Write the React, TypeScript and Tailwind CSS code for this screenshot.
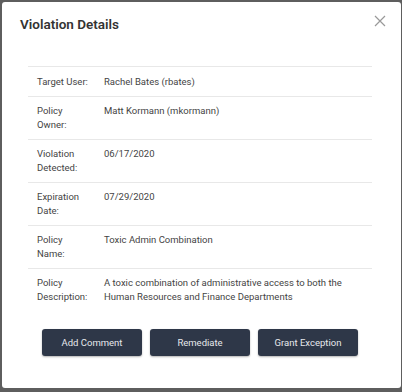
import React from "react";

const rows: [string, string][] = [
  ["Target User:", "Rachel Bates (rbates)"],
  ["Policy Owner:", "Matt Kormann (mkormann)"],
  ["Violation Detected:", "06/17/2020"],
  ["Expiration Date:", "07/29/2020"],
  ["Policy Name:", "Toxic Admin Combination"],
  [
    "Policy Description:",
    "A toxic combination of administrative access to both the Human Resources and Finance Departments",
  ],
];

const App = () => {
  return (
    <div className="h-[392px] w-[402px] bg-[#5e5e5e] pl-[2px] pr-px pt-[2px] font-['Roboto',sans-serif]">
      <div className="flex h-[386px] flex-col rounded-[3px] bg-white">
        <div className="flex items-start justify-between pl-[18px] pr-[15px] pt-[12px]">
          <h1 className="text-[13.5px] font-semibold text-[#333]">Violation Details</h1>
          <button className="mt-[1px] text-[#999]">
            <svg width="12" height="12" viewBox="0 0 12 12" stroke="currentColor" strokeWidth="1.2">
              <path d="M1 1L11 11M11 1L1 11" />
            </svg>
          </button>
        </div>
        <div className="mx-[26px] mt-[32px] mr-[29px] border-t border-[#e8e8e8]">
          {rows.map(([label, value], i) => (
            <div
              key={label}
              className={`flex px-[9px] text-[9.5px] leading-[14px] text-[#444] ${
                i === 0 ? "py-[7.5px]" : "py-[7px]"
              } ${i < rows.length - 1 ? "border-b border-[#e8e8e8]" : ""}`}
            >
              <div className="w-[67px] shrink-0 pr-[13px]">{label}</div>
              <div className="flex-1">{value}</div>
            </div>
          ))}
        </div>
        <div className="mt-[18px] flex justify-center gap-[8px] pr-[3px]">
          {["Add Comment", "Remediate", "Grant Exception"].map((b) => (
            <button
              key={b}
              className="h-[27px] w-[100px] rounded-[3px] bg-[#2e3748] text-[9.5px] text-[#e6e8ec] shadow-[0_1px_2px_rgba(0,0,0,0.3)]"
            >
              {b}
            </button>
          ))}
        </div>
      </div>
    </div>
  );
};

export default App;
